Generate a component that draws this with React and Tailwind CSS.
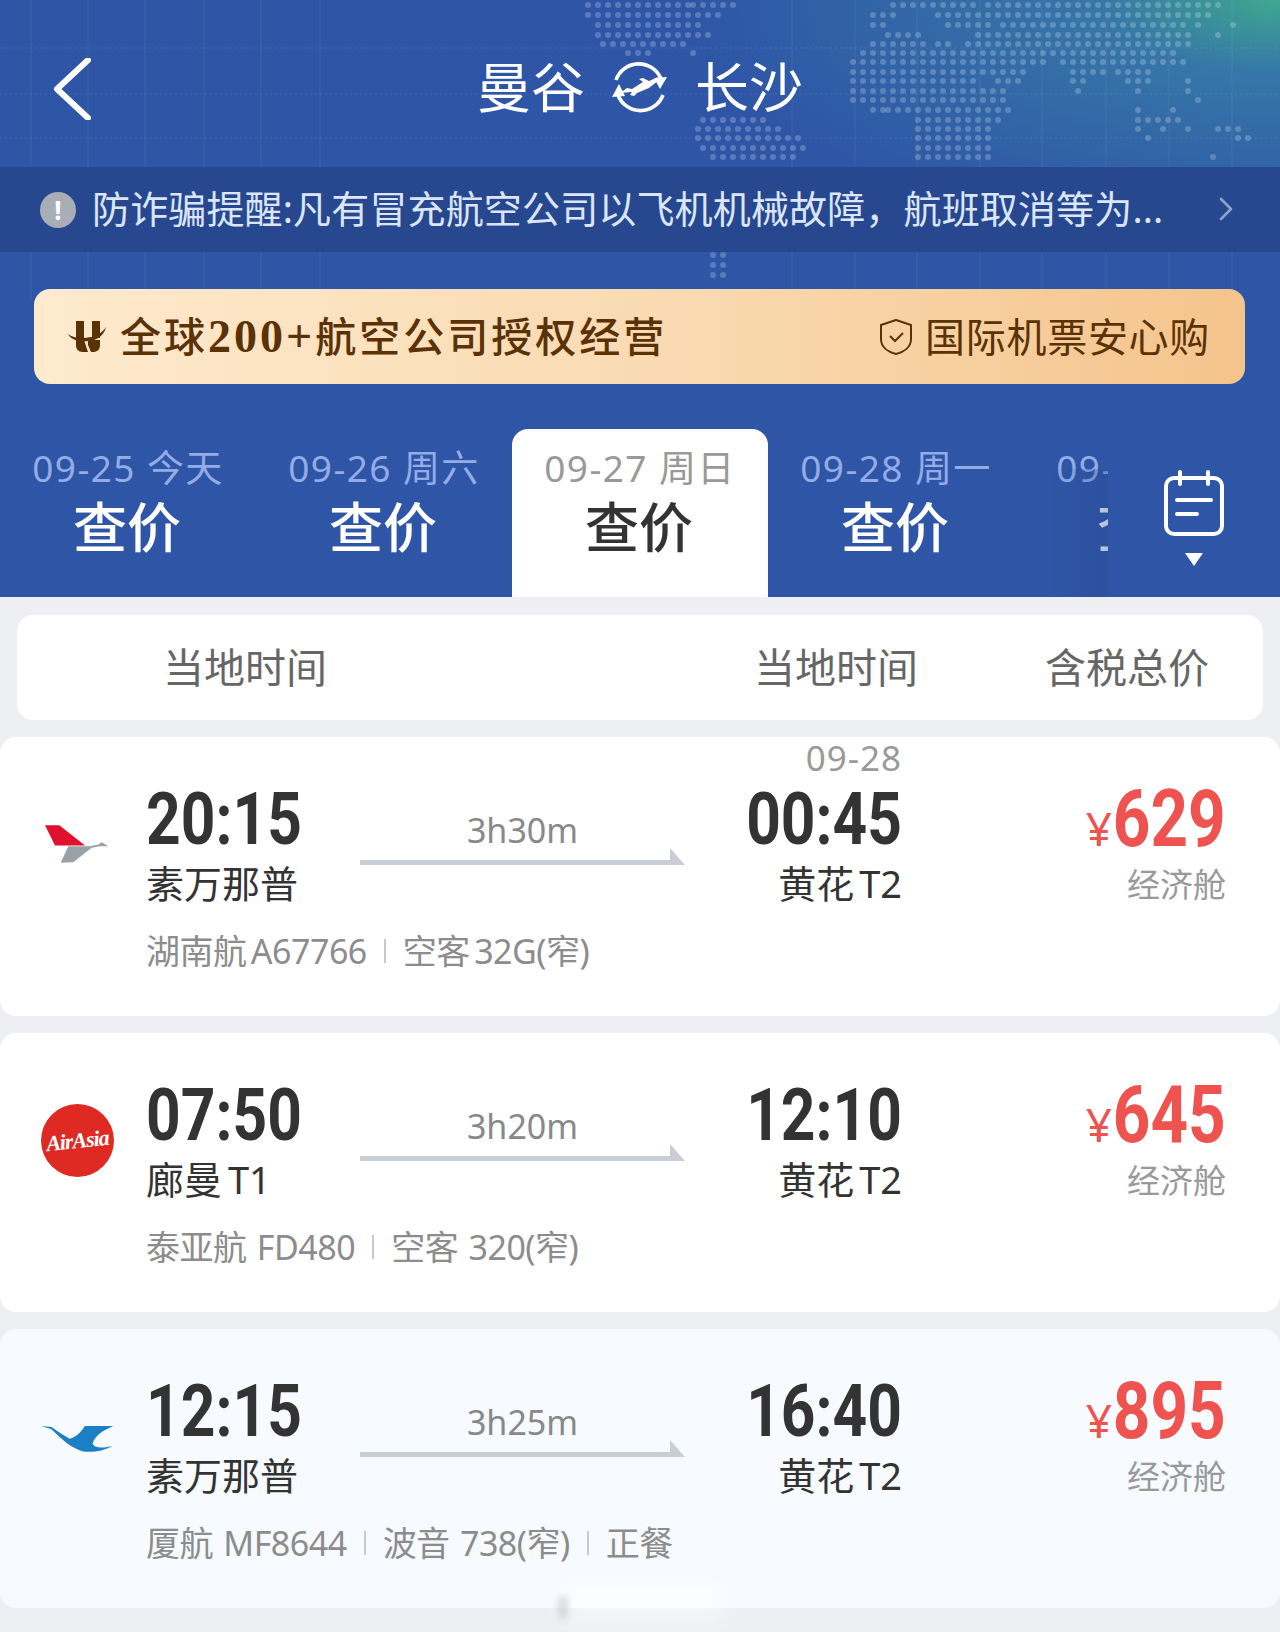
import { ChevronRight } from "lucide-react";

// dot map rows: [y, x0, x1]
const mapRows = [
  [5, 585, 685], [5, 690, 730], [5, 890, 930], [5, 940, 975], [5, 985, 1215],
  [15, 585, 715], [15, 870, 895], [15, 935, 975], [15, 985, 1205],
  [25, 595, 695], [25, 870, 885], [25, 945, 990], [25, 1000, 1180], [25, 1195, 1200], [25, 1230, 1235],
  [35, 595, 705], [35, 885, 915], [35, 975, 1190], [35, 1215, 1220],
  [44, 600, 685], [44, 870, 920], [44, 935, 950], [44, 965, 1185],
  [53, 625, 650], [53, 690, 695], [53, 860, 1175],
  [62, 850, 970], [62, 980, 1040], [62, 1060, 1185],
  [72, 850, 1020], [72, 1070, 1105], [72, 1115, 1150],
  [81, 850, 975], [81, 995, 1020], [81, 1070, 1085], [81, 1125, 1150], [81, 1185, 1190],
  [91, 850, 1000], [91, 1075, 1080], [91, 1135, 1140], [91, 1185, 1190],
  [100, 850, 1005], [100, 1195, 1200],
  [110, 870, 880], [110, 885, 1005], [110, 1135, 1140], [110, 1170, 1175],
  [120, 700, 760], [120, 915, 995], [120, 1135, 1175],
  [129, 695, 780], [129, 915, 990], [129, 1135, 1140], [129, 1160, 1165], [129, 1185, 1190], [129, 1215, 1235],
  [138, 695, 800], [138, 915, 985], [138, 1145, 1150], [138, 1235, 1245],
  [148, 700, 800], [148, 915, 990],
  [157, 710, 790], [157, 915, 990], [157, 1210, 1215],
  [255, 710, 720], [265, 710, 720], [275, 710, 720],
];

const mapDots = [];
mapRows.forEach(([y, x0, x1]) => {
  for (let x = x0; x <= x1; x += 10) mapDots.push([x, y]);
});

const dates = [
  { date: "09-25 今天" },
  { date: "09-26 周六" },
  { date: "09-27 周日", active: true },
  { date: "09-28 周一" },
  { date: "09-29 周二" },
];

const flights = [
  {
    from: "20:15", to: "00:45", toDate: "09-28", dep: "素万那普", dur: "3h30m", price: "629",
    info: ["湖南航 A67766", "空客 32G(窄)"], logo: "hunan", bg: "bg-white", infoGap: "[word-spacing:-4px]",
  },
  {
    from: "07:50", to: "12:10", dep: "廊曼 T1", dur: "3h20m", price: "645",
    info: ["泰亚航 FD480", "空客 320(窄)"], logo: "airasia", bg: "bg-white", infoGap: "[word-spacing:2px]",
  },
  {
    from: "12:15", to: "16:40", dep: "素万那普", dur: "3h25m", price: "895",
    info: ["厦航 MF8644", "波音 738(窄)", "正餐"], logo: "xiamen", bg: "bg-[#f7faff]", infoGap: "[word-spacing:2px]",
  },
];

function WorldMap() {
  return (
    <svg className="absolute left-0 top-0" width="1280" height="300" viewBox="0 0 1280 300">
      {[31, 88, 145, 204, 261, 320, 792, 855, 917, 980, 1042, 1106, 1169, 1232].map((x) => (
        <line key={x} x1={x} y1="0" x2={x} y2="300" stroke="#ffffff" strokeOpacity="0.07" />
      ))}
      {[48, 94, 138].map((y) => (
        <line key={y} x1="0" y1={y} x2="1280" y2={y} stroke="#ffffff" strokeOpacity="0.1" strokeDasharray="2 3" />
      ))}
      {mapDots.map(([x, y], i) => (
        <rect key={i} x={x} y={y - 3} width="6" height="6" rx="3" fill="#ffffff" fillOpacity="0.22" />
      ))}
    </svg>
  );
}

function BackIcon() {
  return (
    <svg className="absolute left-[53px] top-[58px]" width="38" height="62" viewBox="0 0 38 62" fill="none">
      <path d="M35 2 L4 31 L35 60" stroke="#fff" strokeWidth="6" strokeLinejoin="round" strokeLinecap="round" />
    </svg>
  );
}

function RouteIcon() {
  return (
    <svg width="60" height="58" viewBox="0 0 60 58" fill="none">
      <path d="M6 22 A24 24 0 0 1 51 21" stroke="#fff" strokeWidth="3.6" />
      <path d="M44 20 L57 19 L50 31 Z" fill="#fff" />
      <path d="M53 37 A24 24 0 0 1 8 37" stroke="#fff" strokeWidth="3.6" />
      <path d="M15 38 L2 39 L9 26 Z" fill="#fff" />
      <path d="M10 35 L17 30 L22 31 L33 24 L29 21 L33 20 L39 23 L46 20 C49 19 51 20 49 22 L39 30 L27 35 L24 38 L20 37 L22 34 Z" fill="#fff" />
    </svg>
  );
}

function BrandMark() {
  return (
    <svg width="40" height="36" viewBox="0 0 40 36">
      <path d="M9 2 H17 V19 H9 Z M25 2 H33 V19 H25 Z" fill="#5a3206" />
      <path d="M9 21 H17 L21 33 H16 C11 33 9 30 9 26 Z M21 21 H33 V26 C33 31 30 33 26 33 H24 L21 26 Z" fill="#5a3206" />
      <path d="M1 15 C6 19 14 20 24 18 C30 17 36 13 39 8 C37 17 30 21 22 22 C12 23 4 21 1 15 Z" fill="#5a3206" />
    </svg>
  );
}

function ShieldIcon() {
  return (
    <svg width="36" height="38" viewBox="0 0 36 38" fill="none" stroke="#5a3206" strokeWidth="2">
      <path d="M18 2 L33 7 V21 C33 29 26 34 18 36 C10 34 3 29 3 21 V7 Z" strokeLinejoin="round" />
      <path d="M12 18 L17 23 L25 15" />
    </svg>
  );
}

function CalendarIcon() {
  return (
    <svg width="62" height="66" viewBox="0 0 62 66" fill="none" stroke="#fff" strokeWidth="4" strokeLinecap="round">
      <rect x="3" y="8" width="56" height="56" rx="8" />
      <path d="M17 2 V14 M45 2 V14" />
      <path d="M14 30 H48 M14 44 H34" />
    </svg>
  );
}

function AirlineLogo({ name }) {
  if (name === "airasia") {
    return (
      <div className="flex h-[73px] w-[73px] items-center justify-center rounded-full bg-[#df2a24] pt-[1px]">
        <span className="-rotate-6 font-['Liberation_Serif',serif] text-[22px] font-bold italic leading-none tracking-[-1px] text-white">
          AirAsia
        </span>
      </div>
    );
  }
  if (name === "hunan") {
    return (
      <svg width="64" height="40" viewBox="75 100 192 117">
        <path d="M75 102 L118 102 L195 163 L105 163 Z" fill="#e0102f" />
        <path d="M195 165 L145 165 L122 215 L160 213 L215 170 L240 165 L265 165 L245 153 L235 160 L210 165 Z" fill="#9aa1a6" />
      </svg>
    );
  }
  return (
    <svg className="mt-[5px]" width="73" height="28" viewBox="64 110 218 82">
      <path
        d="M65 112 L95 115 C115 128 130 140 150 150 C170 145 185 128 195 112 L280 112 C250 125 225 140 218 165 C225 180 255 178 278 171 C250 188 215 192 190 188 C150 178 120 145 95 122 Z"
        fill="#1b80c3"
      />
    </svg>
  );
}

function RouteLine() {
  return (
    <svg width="325" height="18" viewBox="0 0 325 18" className="block">
      <path d="M0 12 H310 V0 L325 17 H0 Z" fill="#c9ced6" />
    </svg>
  );
}

function FlightCard({ f }) {
  return (
    <div className={`relative h-[279px] rounded-2xl ${f.bg}`}>
      <div className="flex items-start pt-[44px]">
        <div className="flex h-[124px] w-[146px] shrink-0 items-center justify-center pl-[8px] pt-[2px]">
          <AirlineLogo name={f.logo} />
        </div>

        {/* departure */}
        <div className="w-[214px] shrink-0">
          <div className="h-[76px] origin-left scale-x-[0.84] whitespace-nowrap pt-[1px] font-['Roboto',sans-serif] text-[72px] font-bold leading-[76px] text-[#333]">
            {f.from}
          </div>
          <div className="h-[56px] text-[38px] leading-[52px] text-[#333] [word-spacing:-4px]">{f.dep}</div>
        </div>

        {/* duration */}
        <div className="w-[325px] shrink-0 pt-[31px]">
          <div className="h-[36px] text-center text-[34px] leading-[37px] text-[#888]">{f.dur}</div>
          <RouteLine />
        </div>

        {/* arrival */}
        <div className="relative w-[217px] shrink-0 text-right">
          {f.toDate && (
            <div className="absolute right-0 top-[-42px] text-[35px] leading-[38px] tracking-[1px] text-[#999]">{f.toDate}</div>
          )}
          <div className="h-[76px] origin-right scale-x-[0.84] whitespace-nowrap pt-[1px] font-['Roboto',sans-serif] text-[72px] font-bold leading-[76px] text-[#333]">
            {f.to}
          </div>
          <div className="h-[56px] text-[38px] leading-[52px] text-[#333] [word-spacing:-5px]">黄花 T2</div>
        </div>

        {/* price */}
        <div className="flex-1 pr-[54px] text-right">
          <div className="flex h-[76px] items-baseline justify-end text-[#ef5350]">
            <span className="mr-[6px] text-[46px] leading-[76px]">¥</span>
            <div className="flex w-[108px] justify-end">
              <span className="shrink-0 origin-right scale-x-[0.82] font-['Roboto',sans-serif] text-[80px] font-bold leading-[76px]">
                {f.price}
              </span>
            </div>
          </div>
          <div className="h-[56px] text-[33px] leading-[56px] text-[#999]">经济舱</div>
        </div>
      </div>

      <div className={`mt-[13px] flex h-[50px] items-center pl-[146px] text-[34px] leading-[50px] tracking-[-0.5px] text-[#8c8c8c] ${f.infoGap}`}>
        {f.info.map((t, i) => (
          <div key={t} className="flex items-center">
            {i > 0 && <div className="mx-[17px] h-[24px] w-[2px] bg-[#c9c9c9]" />}
            <span>{t}</span>
          </div>
        ))}
      </div>
    </div>
  );
}

export default function App() {
  return (
    <div className="relative h-[1632px] w-[1280px] overflow-hidden bg-[#edeff2] font-['Noto_Sans','Noto_Sans_CJK_SC',sans-serif]">
      {/* Blue header */}
      <div className="relative h-[597px] overflow-hidden bg-[#2e55a6]">
        <div className="absolute inset-x-0 top-0 h-[300px] bg-[radial-gradient(ellipse_600px_240px_at_top_right,#3fa88f_0%,rgba(56,130,168,0.75)_30%,rgba(46,85,166,0)_100%)]" />
        <WorldMap />

        <div className="relative flex h-[167px] items-center justify-center pt-[7px]">
          <BackIcon />
          <span className="text-[54px] leading-none text-white">曼谷</span>
          <div className="mx-[25px]">
            <RouteIcon />
          </div>
          <span className="text-[54px] leading-none text-white">长沙</span>
        </div>

        {/* notice */}
        <div className="relative flex h-[85px] items-center bg-[#27488f] pl-[40px]">
          <div className="flex h-[36px] w-[36px] items-center justify-center rounded-full bg-[#a9adb5] text-[26px] font-bold leading-none text-white">
            !
          </div>
          <span className="ml-[16px] w-[1075px] whitespace-nowrap pb-[4px] text-[38px] leading-none tracking-[0.15px] text-[#dbe6fa]">
            防诈骗提醒:凡有冒充航空公司以飞机机械故障，航班取消等为...
          </span>
          <ChevronRight className="mb-[2px] ml-[39px]" size={40} color="#8fa3c8" strokeWidth={1.6} />
        </div>

        {/* banner */}
        <div className="relative ml-[34px] mr-[35px] mt-[37px] flex h-[95px] items-center justify-between rounded-2xl bg-[linear-gradient(90deg,#feeacd_0%,#f9d9b0_55%,#f5c48c_100%)] pl-[33px] pr-[35px] text-[#5a3206]">
          <div className="flex items-center">
            <BrandMark />
            <span className="ml-[13px] font-['Liberation_Serif','Noto_Sans_CJK_SC',serif] text-[41px] font-medium leading-none tracking-[3px]">
              全球<span className="text-[46px] font-bold tracking-[3px]">200+</span>航空公司授权经营
            </span>
          </div>
          <div className="flex items-center">
            <ShieldIcon />
            <span className="ml-[11px] text-[40px] leading-none tracking-[0.7px]">国际机票安心购</span>
          </div>
        </div>

        {/* date tabs */}
        <div className="relative mt-[45px] flex h-[168px]">
          <div className="flex w-[1108px] shrink-0 overflow-hidden">
            {dates.map((d) => (
              <div
                key={d.date}
                className={`flex h-[168px] w-[256px] shrink-0 flex-col items-center whitespace-nowrap pt-[16px] ${
                  d.active ? "rounded-t-2xl bg-white" : ""
                }`}
              >
                <span className={`text-[37px] leading-[46px] tracking-[1.4px] ${d.active ? "text-[#999]" : "text-[#93ace6]"}`}>
                  {d.date}
                </span>
                <span className={`mr-[2px] mt-[6px] text-[54px] font-medium leading-[60px] ${d.active ? "text-[#333]" : "text-white"}`}>
                  查价
                </span>
              </div>
            ))}
          </div>
          <div className="absolute left-[1050px] top-[40px] h-[128px] w-[58px] bg-[linear-gradient(90deg,rgba(39,72,143,0),rgba(39,72,143,0.35))]" />
          <div className="flex flex-1 flex-col items-center pt-[41px]">
            <CalendarIcon />
            <div className="mt-[17px] h-0 w-0 border-x-[9px] border-t-[13px] border-x-transparent border-t-white" />
          </div>
        </div>
      </div>

      {/* column titles */}
      <div className="mx-[17px] mt-[18px] flex h-[105px] items-center rounded-2xl bg-white pl-[146px] text-[41px] leading-none text-[#666]">
        <span className="w-[591px]">当地时间</span>
        <span className="w-[291px]">当地时间</span>
        <span>含税总价</span>
      </div>

      <div className="mt-[17px] flex flex-col gap-[17px]">
        {flights.map((f) => (
          <FlightCard key={f.from} f={f} />
        ))}
      </div>

      {/* blurred watermark */}
      <div className="absolute left-[560px] top-[1582px] h-[38px] w-[165px] bg-white/50 blur-md" />
      <div className="absolute left-[558px] top-[1596px] h-[24px] w-[10px] rounded-full bg-[#c8c8c8]/60 blur-[3px]" />
    </div>
  );
}
